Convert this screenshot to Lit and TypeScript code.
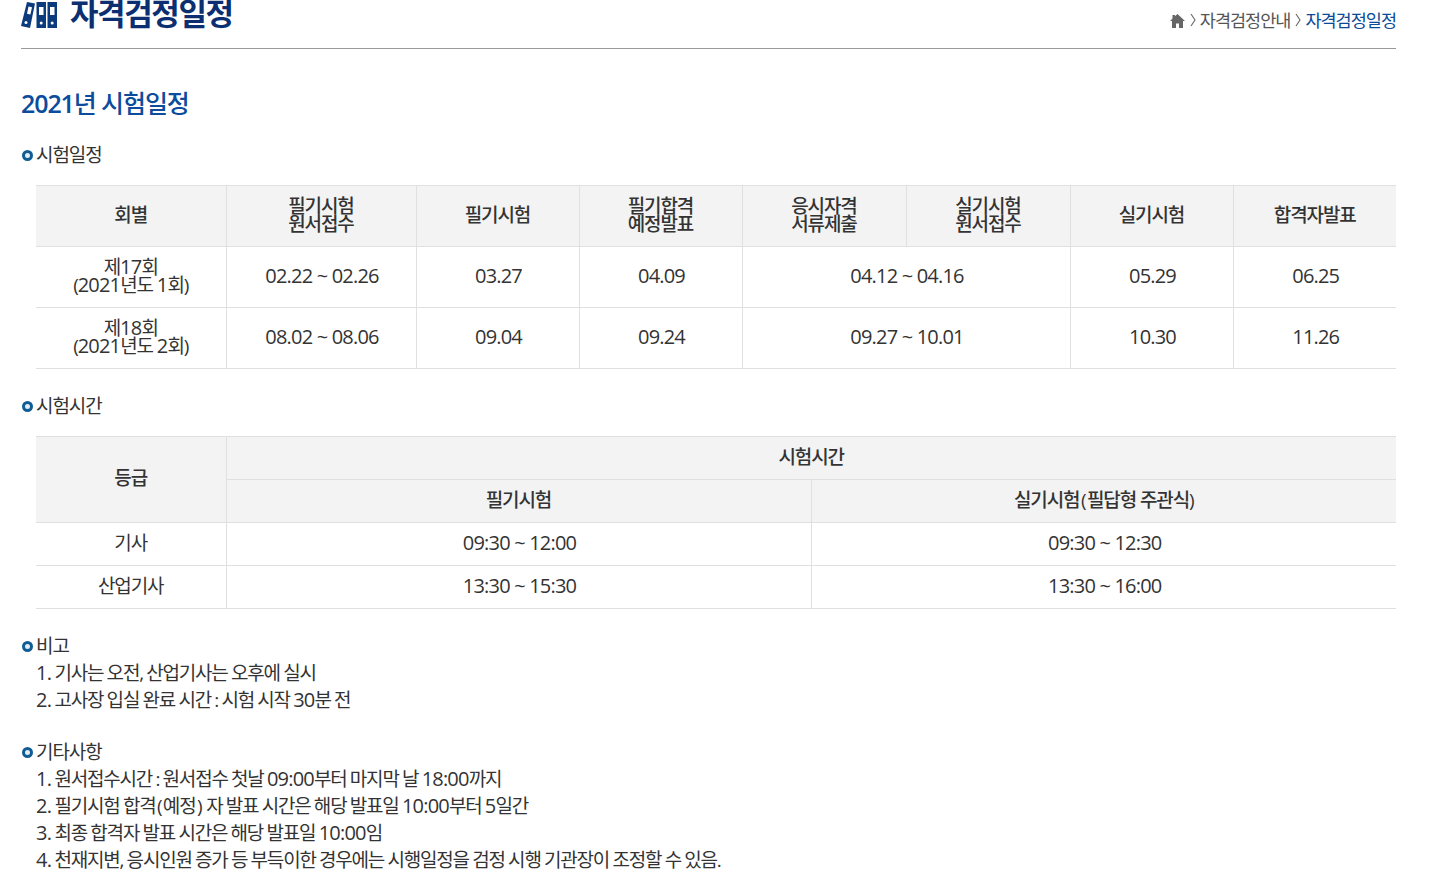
import { LitElement, html, css } from "lit";
import { customElement } from "lit/decorators.js";

const homeIcon = html`<svg class="home" viewBox="0 0 15 15" aria-hidden="true"><path fill="#666" d="M7.5 1 L15 8 H13 V15 H9 V10.5 H6 V15 H2 V8 H0 L2.5 5.6 V2 H5 V3.3 Z"/></svg>`;
const sepIcon = html`<svg class="sep" viewBox="0 0 6 14" aria-hidden="true"><path fill="none" stroke="#666" stroke-width="1.1" d="M1 1 L5 7 L1 13"/></svg>`;
const bookIcon = html`<svg class="books" viewBox="0 0 36 26" aria-hidden="true">
  <path fill="#0b3a7d" d="M6 0 L14 1.5 L9 26 L0 24 Z"/>
  <rect fill="#0b3a7d" x="15.5" y="0" width="9.5" height="26"/>
  <rect fill="#0b3a7d" x="26.5" y="0" width="9.5" height="26"/>
  <rect fill="#fff" x="18" y="5" width="4.5" height="8"/><rect fill="#fff" x="29" y="5" width="4.5" height="8"/>
  <path fill="#fff" d="M7.5 4.5 L11 5.2 L9.4 12.5 L6 11.7Z"/>
  <circle fill="#fff" cx="20.2" cy="21" r="1.5"/><circle fill="#fff" cx="31.2" cy="21" r="1.5"/><circle fill="#fff" cx="5" cy="20.5" r="1.5"/>
</svg>`;

@customElement("app-root")
export class AppRoot extends LitElement {
  static styles = css`
    :host { display: block; width: 1447px; height: 895px; overflow: hidden; background: #fff;
      font-family: "Open Sans", "Noto Sans CJK KR", sans-serif; color: #333; letter-spacing: -1px; font-size: 19px; }
    .page { width: 1375px; margin-left: 21px; }
    .head { display: flex; justify-content: space-between; align-items: flex-end; height: 48px; border-bottom: 1px solid #999; }
    .title { display: flex; align-items: center; gap: 13px; margin-bottom: 19px; color: #0b2f70; font-size: 31px; font-weight: 700; line-height: 32px; letter-spacing: -1.4px; }
    .books { width: 36px; height: 26px; margin-bottom: -3px; }
    .crumb { display: flex; align-items: center; font-size: 17.5px; line-height: 24px; margin-bottom: 16px; color: #555; }
    .crumb b { font-weight: 400; color: #0b4a96; }
    .home { width: 15px; height: 15px; }
    .sep { width: 6px; height: 14px; margin: 0 4px 0 5px; }
    h2 { margin: 37px 0 0; font-size: 25px; line-height: 35px; font-weight: 500; color: #0b4c9c; letter-spacing: -1.1px; }
    h2 span { font-weight: 600; }
    .sect { display: flex; align-items: center; margin: 0; font-size: 19px; line-height: 27px; font-weight: 400; color: #333; letter-spacing: -1.1px; }
    .sect::before { content: ""; width: 5px; height: 5px; border: 3px solid #0f5d94; border-radius: 50%; margin: 0 3px 0 1px; background: #e4edf3; box-sizing: content-box; }
    .s1 { margin-top: 21px; }
    table { border-collapse: collapse; table-layout: fixed; margin-left: 15px; width: 1360px; border-top: 1px solid #e0e0e0; }
    .t1 { margin-top: 16px; }
    .t2 { margin-top: 16px; }
    th, td { border: 1px solid #e0e0e0; text-align: center; padding: 0 0 3px; font-size: 19px; color: #333; line-height: 18px; letter-spacing: -1.1px; }
    th { background: #f3f3f3; font-weight: 500; }
    th:first-child, td:first-child { border-left: 0; }
    th:last-child, td:last-child { border-right: 0; }
    td.num { font-size: 20px; letter-spacing: -0.8px; padding-left: 2px; }
    .t1 tr { height: 61px; }
    .t2 tr { height: 43px; }
    .c0 { width: 190px; } .c1 { width: 190px; } .cn { width: 163px; } .cm { width: 164px; }
    .first { width: 190px; }
    .notes { margin: 0; padding: 0 0 0 15px; list-style: none; font-size: 19px; line-height: 27px; color: #333; letter-spacing: -1.2px; word-spacing: -0.4px; }
    .n { font-size: 20px; letter-spacing: -0.8px; line-height: 0; }
    .p { margin: 0 1.5px; }
    .s2 { margin-top: 24px; }
    .s3 { margin-top: 24px; }
    .s4 { margin-top: 25px; }
  `;

  render() {
    return html`<div class="page">
      <header class="head">
        <div class="title">${bookIcon}<span>자격검정일정</span></div>
        <nav class="crumb">${homeIcon}${sepIcon}자격검정안내${sepIcon}<b>자격검정일정</b></nav>
      </header>
      <h2><span>2021</span>년 시험일정</h2>
      <h3 class="sect s1">시험일정</h3>
      <table class="t1">
        <colgroup><col class="c0"><col class="c1"><col class="cn"><col class="cn"><col class="cm"><col class="cm"><col class="cn"><col class="cn"></colgroup>
        <tr><th>회별</th><th>필기시험<br>원서접수</th><th>필기시험</th><th>필기합격<br>예정발표</th><th>응시자격<br>서류제출</th><th>실기시험<br>원서접수</th><th>실기시험</th><th>합격자발표</th></tr>
        <tr><td>제<span class="n">17</span>회<br>(<span class="n">2021</span>년도 <span class="n">1</span>회)</td><td class="num">02.22 ~ 02.26</td><td class="num">03.27</td><td class="num">04.09</td><td class="num" colspan="2">04.12 ~ 04.16</td><td class="num">05.29</td><td class="num">06.25</td></tr>
        <tr><td>제<span class="n">18</span>회<br>(<span class="n">2021</span>년도 <span class="n">2</span>회)</td><td class="num">08.02 ~ 08.06</td><td class="num">09.04</td><td class="num">09.24</td><td class="num" colspan="2">09.27 ~ 10.01</td><td class="num">10.30</td><td class="num">11.26</td></tr>
      </table>
      <h3 class="sect s2">시험시간</h3>
      <table class="t2">
        <colgroup><col class="first"><col><col></colgroup>
        <tr><th rowspan="2">등급</th><th colspan="2">시험시간</th></tr>
        <tr><th>필기시험</th><th>실기시험<span class="p">(</span>필답형 주관식)</th></tr>
        <tr><td>기사</td><td class="num">09:30 ~ 12:00</td><td class="num">09:30 ~ 12:30</td></tr>
        <tr><td>산업기사</td><td class="num">13:30 ~ 15:30</td><td class="num">13:30 ~ 16:00</td></tr>
      </table>
      <h3 class="sect s3">비고</h3>
      <ol class="notes"><li><span class="n">1.</span> 기사는 오전, 산업기사는 오후에 실시</li><li><span class="n">2.</span> 고사장 입실 완료 시간 : 시험 시작 <span class="n">30</span>분 전</li></ol>
      <h3 class="sect s4">기타사항</h3>
      <ol class="notes">
        <li><span class="n">1.</span> 원서접수시간 : 원서접수 첫날 <span class="n">09:00</span>부터 마지막 날 <span class="n">18:00</span>까지</li>
        <li><span class="n">2.</span> 필기시험 합격<span class="p">(</span>예정<span class="p">)</span> 자 발표 시간은 해당 발표일 <span class="n">10:00</span>부터 <span class="n">5</span>일간</li>
        <li><span class="n">3.</span> 최종 합격자 발표 시간은 해당 발표일 <span class="n">10:00</span>임</li>
        <li><span class="n">4.</span> 천재지변, 응시인원 증가 등 부득이한 경우에는 시행일정을 검정 시행 기관장이 조정할 수 있음.</li>
      </ol>
    </div>`;
  }
}
